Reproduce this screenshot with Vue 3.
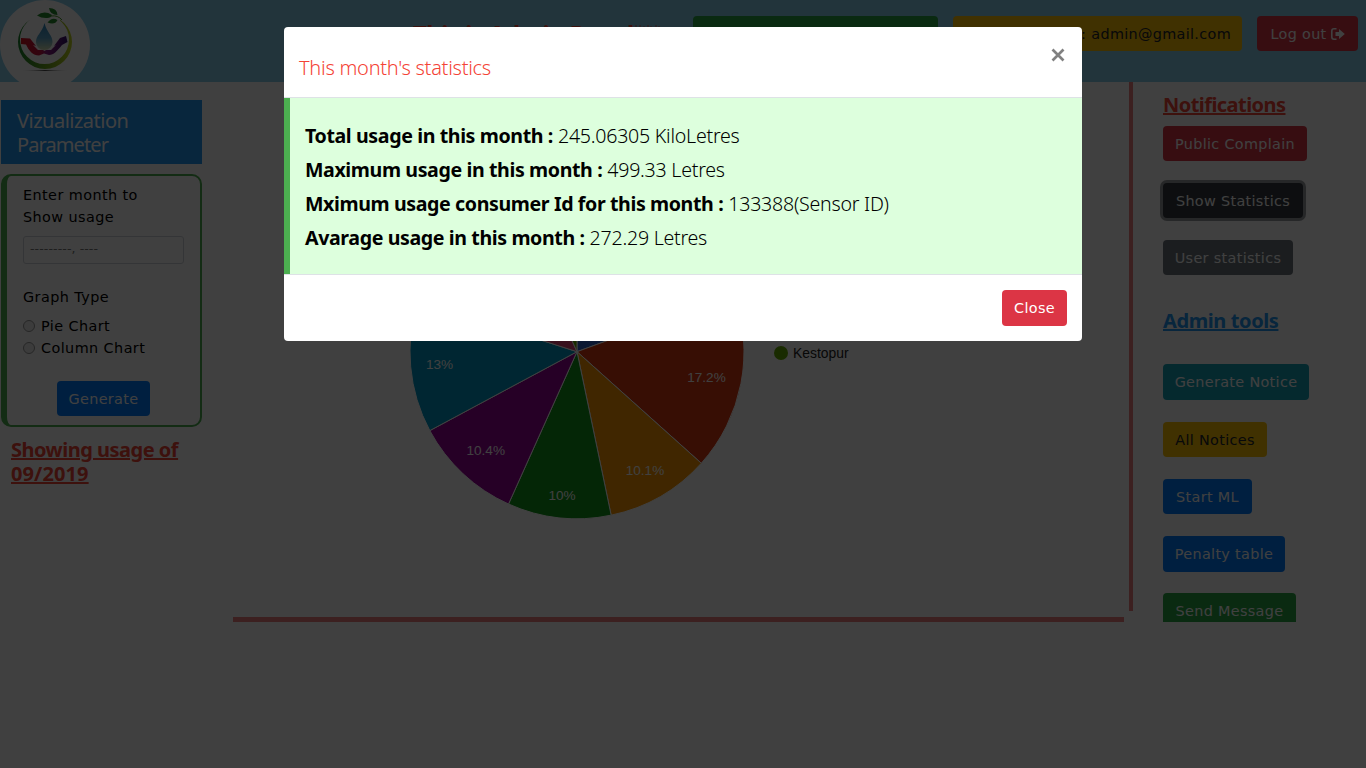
<script setup>
const cx = 577
const cy = 351.7
const r = 167
const raw = [
  { from: 0, to: 69.9, color: '#3366cc' },
  { from: 69.9, to: 131.9, color: '#dc3912', label: '17.2%', x: 706.5, y: 382 },
  { from: 131.9, to: 168.2, color: '#ff9900', label: '10.1%', x: 645, y: 475 },
  { from: 168.2, to: 204.2, color: '#109618', label: '10%', x: 562, y: 500 },
  { from: 204.2, to: 241.8, color: '#990099', label: '10.4%', x: 485.7, y: 455 },
  { from: 241.8, to: 287.8, color: '#0099c6', label: '13%', x: 439.5, y: 369 },
  { from: 287.8, to: 335.7, color: '#dd4477' },
  { from: 335.7, to: 360, color: '#66aa00' }
]
const point = (deg) => {
  const a = (deg * Math.PI) / 180
  return `${(cx + r * Math.sin(a)).toFixed(2)} ${(cy - r * Math.cos(a)).toFixed(2)}`
}
const slices = raw.map((s) => ({
  ...s,
  d: `M${cx} ${cy}L${point(s.from)}A${r} ${r} 0 0 1 ${point(s.to)}Z`
}))
const tools = [
  { text: 'Generate Notice', cls: 'info w146' },
  { text: 'All Notices', cls: 'warning w104' },
  { text: 'Start ML', cls: 'primary w89' },
  { text: 'Penalty table', cls: 'primary w122' },
  { text: 'Send Message', cls: 'success w133' }
]
const stats = [
  { key: 'Total usage in this month :', value: '245.06305 KiloLetres' },
  { key: 'Maximum usage in this month :', value: '499.33 Letres' },
  { key: 'Mximum usage consumer Id for this month :', value: '133388(Sensor ID)' },
  { key: 'Avarage usage in this month :', value: '272.29 Letres' }
]
</script>

<template>
  <div class="page">
    <header class="top">
      <svg class="logo" width="90" height="90" viewBox="0 0 90 90">
        <defs>
          <linearGradient id="ring" x1="0" x2="1" y1="0" y2="0">
            <stop offset="0" stop-color="#16802a" /><stop offset=".5" stop-color="#6aa51e" /><stop offset="1" stop-color="#c3d420" />
          </linearGradient>
          <linearGradient id="drop" x1="0" x2="0" y1="0" y2="1">
            <stop offset="0" stop-color="#2c86bd" /><stop offset=".55" stop-color="#5ba5cc" /><stop offset="1" stop-color="#d7e3b4" />
          </linearGradient>
          <linearGradient id="hands" x1="0" x2="1" y1="0" y2="0">
            <stop offset="0" stop-color="#d8101c" /><stop offset=".43" stop-color="#c41442" /><stop offset=".55" stop-color="#8d1d80" /><stop offset="1" stop-color="#35106e" />
          </linearGradient>
          <radialGradient id="shade"><stop offset="0" stop-color="#444" /><stop offset="1" stop-color="#fff" stop-opacity="0" /></radialGradient>
        </defs>
        <circle cx="45" cy="45" r="45" fill="#fff" />
        <path fill-rule="evenodd" d="M18 42A27 27 0 1 0 72 42A27 27 0 1 0 18 42ZM20 39.500A24.500 24.500 0 1 1 69 39.500A24.500 24.500 0 1 1 20 39.500Z" fill="url(#ring)" />
        <path d="M34 10H60V22H34Z" fill="#fff" />
        <path d="M37 15.500Q44 10 52 15Q51 18.500 46 18Q41 18 37 15.500ZM49 8Q57 8 57.500 15Q50 15 49 8ZM47.500 22.500Q52 16.500 57.500 20Q55 25.500 47.500 22.500Z" fill="#258b2d" />
        <path d="M51 16Q58 15 62 20" fill="none" stroke="#4c9a2b" />
        <path d="M44.500 23C42 33 36 35 36 42A8.250 8 0 0 0 52.500 42C52.500 35 47 33 44.500 23Z" fill="url(#drop)" />
        <path d="M21 38L30 38.500L36 46L33 45L38 50H43L44.500 51L46 50H51L56 45L54 46L60 38L66 36L67.500 42L62 45C57 51 54 55 49 55L44 53.500L39 55.500C33 55.500 29 51 26 44.500L21 44Z" fill="url(#hands)" />
        <ellipse cx="45" cy="70.500" rx="25" ry="1" fill="url(#shade)" />
      </svg>
      <h1 class="title">
        <b>This is Admin Panel</b>
        <svg width="28" height="24" viewBox="0 0 28 24"><path d="M2 2V22M6 2V22M10 3V22M14 2V22M17 3V22M22 2V22M25 3V22" stroke="#f44336" stroke-width="1" opacity=".75" /></svg>
      </h1>
      <div class="pill success greeting"></div>
      <div class="pill warning mail"><span class="colon">:</span><span>admin@gmail.com</span></div>
      <div class="pill danger logout">
        <span>Log out</span>
        <svg width="14" height="12" viewBox="0 0 14 12"><path d="M5.500 .8H3A2.200 2.200 0 0 0 .8 3V9A2.200 2.200 0 0 0 3 11.200H5.500" fill="none" stroke="#fff" stroke-width="1.600" /><path d="M4.500 4H8V1L13.800 6L8 11V8H4.500Z" fill="#fff" /></svg>
      </div>
    </header>

    <main class="body">
      <aside class="left">
        <h2 class="viz"><div class="v1">Vizualization</div><div class="v2">Parameter</div></h2>
        <form class="panel">
          <div class="l1">Enter month to</div>
          <div class="l2">Show usage</div>
          <div class="month">---------, ----</div>
          <div class="graph">Graph Type</div>
          <label class="radio"><i></i><span>Pie Chart</span></label>
          <label class="radio"><i></i><span>Column Chart</span></label>
          <div class="pill primary generate">Generate</div>
        </form>
        <h3 class="showing"><div>Showing usage of</div><div class="date">09/2019</div></h3>
      </aside>

      <section class="center"></section>
      <div class="rail"></div>

      <aside class="right">
        <h3 class="red">Notifications</h3>
        <div class="pill danger w144">Public Complain</div>
        <div class="pill dark w140">Show Statistics</div>
        <div class="pill secondary w130">User statistics</div>
        <h3 class="blue">Admin tools</h3>
        <div v-for="t in tools" :key="t.text" class="pill" :class="t.cls">{{ t.text }}</div>
      </aside>
    </main>

    <svg class="chart" width="1366" height="768" viewBox="0 0 1366 768">
      <path v-for="s in slices" :key="s.from" :d="s.d" :fill="s.color" stroke="#fff" stroke-width="1" />
      <template v-for="s in slices" :key="'t' + s.from">
        <text v-if="s.label" :x="s.x" :y="s.y" text-anchor="middle" fill="#fff">{{ s.label }}</text>
      </template>
      <circle cx="781" cy="353" r="7" fill="#66aa00" />
      <text class="legend" x="793" y="358" fill="#222">Kestopur</text>
    </svg>

    <div class="backdrop"></div>

    <div class="modal">
      <div class="mhead">
        <h4>This month's statistics</h4>
        <svg width="14" height="14" viewBox="0 0 14 14"><path d="M1.500 1.500L12.500 12.500M12.500 1.500L1.500 12.500" stroke="#808080" stroke-width="2.700" /></svg>
      </div>
      <div class="mbody">
        <p v-for="s in stats" :key="s.key"><b>{{ s.key }}</b><span>{{ s.value }}</span></p>
      </div>
      <div class="mfoot"><div class="pill danger close">Close</div></div>
    </div>
  </div>
</template>

<style>
body { margin: 0; overflow: hidden; }
</style>

<style scoped>
* { box-sizing: border-box; }
.page { position: relative; width: 1366px; height: 768px; overflow: hidden; background: #fff; font-family: "DejaVu Sans", Verdana, sans-serif; font-size: 14.4px; line-height: 21.6px; letter-spacing: .33px; color: #000; }
h1, h2, h3, h4, p { margin: 0; font-family: "Noto Sans", "Segoe UI", sans-serif; }
.top { display: flex; align-items: flex-start; height: 82px; overflow: hidden; background: #87ceeb; }
.logo { flex: none; }
.title { display: flex; gap: 1px; margin: 19px 0 0 323px; width: 280px; height: 30px; font-size: 24px; line-height: 30px; font-weight: 400; color: #f44336; white-space: nowrap; letter-spacing: -.55px; }
.title svg { margin-top: 4px; }
.pill { display: flex; align-items: center; justify-content: center; height: 35.6px; padding-top: 2px; border-radius: 4px; color: #fff; white-space: nowrap; }
.success { background: #28a745; }
.warning { background: #ffc107; color: #212529; }
.danger { background: #dc3545; }
.primary { background: #007bff; }
.info { background: #17a2b8; }
.secondary { background: #6c757d; }
.greeting { margin: 15.5px 0 0; width: 245px; }
.mail { margin: 15.5px 0 0 15px; width: 289px; justify-content: flex-end; padding-right: 11px; }
.colon { margin-right: 5px; }
.logout { margin: 15.5px 0 0 15px; width: 101px; gap: 4px; }
.body { display: flex; height: 540px; }
.left { width: 233px; padding: 18px 0 0 1px; }
.viz { width: 201px; height: 64px; padding: 9px 16px; background: #2196f3; color: #fff; font-size: 20px; line-height: 24px; font-weight: 400; }
.v1 { letter-spacing: -.5px; }
.v2 { letter-spacing: -.9px; }
.panel { width: 201px; height: 253px; margin-top: 10px; padding: 9px 16px 0 16px; border: 2px solid #4caf50; border-left-width: 6px; border-radius: 10px; letter-spacing: .42px; }
.l1, .l2, .graph { height: 21.600px; }
.month { width: 161px; height: 28px; margin-top: 7.500px; padding-left: 6px; border: 1px solid #ced4da; border-radius: 3px; font-size: 12.500px; line-height: 24px; letter-spacing: .1px; color: #777; }
.graph { margin-top: 23.500px; }
.radio { display: flex; height: 22px; align-items: center; gap: 6px; }
.graph + .radio { margin-top: 7.500px; }
.radio i { width: 12px; height: 12px; margin-top: -3px; border: 1px solid #999; border-radius: 50%; background: #eee; }
.generate { width: 93px; margin: 20.500px 0 0 34px; letter-spacing: .33px; }
.showing { margin: 11px 0 0 10px; font-size: 20px; line-height: 24px; font-weight: 700; color: #f44336; white-space: nowrap; letter-spacing: -.5px; text-decoration: underline; }
.date { letter-spacing: .1px; }
.center { width: 891px; height: 540px; border-bottom: 5px solid #f08080; }
.rail { width: 4px; height: 529px; margin-left: 5px; background: #f08080; }
.right { width: 233px; height: 540px; padding: 11px 0 0 30px; overflow: hidden; }
.right h3 { font-size: 20px; line-height: 24px; font-weight: 700; }
.right h3.red { width: max-content; color: #f44336; letter-spacing: -.55px; text-decoration: underline; }
.right h3.blue { width: max-content; margin: 34px 0 31px; color: #2196f3; letter-spacing: -.4px; text-decoration: underline; }
.right .pill { flex: none; margin-bottom: 21.600px; }
.red + .pill { margin-top: 8.500px; }
.dark { background: #343a40; box-shadow: 0 0 0 3px rgba(52, 58, 64, .5); }
.w144 { width: 144px; }
.w140 { width: 140px; }
.w130 { width: 130px; }
.w146 { width: 146px; }
.w104 { width: 104px; }
.w89 { width: 89px; }
.w122 { width: 122px; }
.w133 { width: 133px; }
.chart { position: absolute; left: 0; top: 0; font: 13.600px "Liberation Sans", Arial, sans-serif; letter-spacing: 0; }
.legend { font-size: 13.900px; }
.backdrop { position: absolute; inset: 0; background: rgba(0, 0, 0, .75); }
.modal { position: absolute; left: 284px; top: 27px; width: 798px; height: 314px; border-radius: 4px; background: #fff; overflow: hidden; }
.mhead { display: flex; justify-content: space-between; height: 71px; padding: 29px 17px 0 15px; border-bottom: 1px solid #dee2e6; }
.mhead svg { margin-top: -8px; }
.mhead h4 { font-size: 20px; line-height: 24px; font-weight: 300; color: #f44336; letter-spacing: -.26px; white-space: nowrap; }
.mbody { height: 176px; padding: 21px 0 0 15px; border-left: 6px solid #4caf50; background: #ddffdd; }
.mbody p { display: flex; gap: 5px; height: 34px; font-size: 19.600px; line-height: 34px; letter-spacing: -.25px; white-space: nowrap; font-weight: 300; }
.mbody b { font-weight: 700; letter-spacing: -.39px; }
.mfoot { display: flex; justify-content: flex-end; height: 67px; padding: 15px 15px 0 0; border-top: 1px solid #dee2e6; }
.close { width: 65px; }
</style>
